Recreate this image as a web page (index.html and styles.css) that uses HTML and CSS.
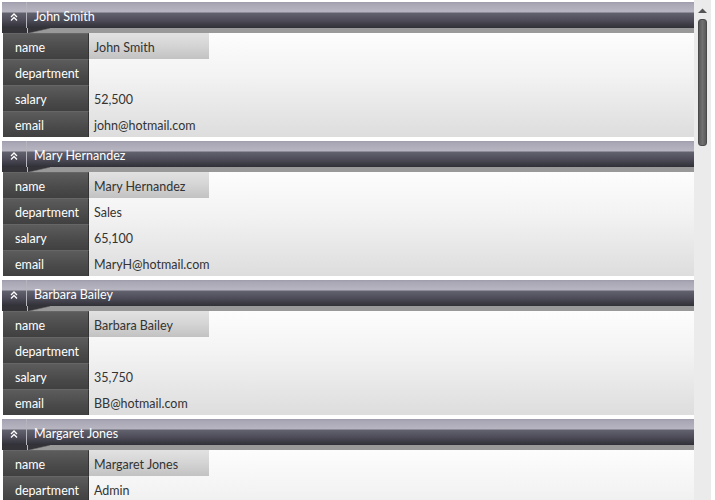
FILE: index.html
```html
<!DOCTYPE html>
<html>
<head>
<meta charset="utf-8">
<link rel="stylesheet" href="styles.css">
</head>
<body>
<div class="app">
  <div class="list">
    <section class="group">
      <div class="head">
        <span class="toggle"><svg width="8" height="8" viewBox="0 0 8 8"><path d="M1 4 L4 1 L7 4 M1 7.5 L4 4.5 L7 7.5" fill="none" stroke="#fff" stroke-width="1.3"/></svg></span>
        <span class="title">John Smith</span>
      </div>
      <div class="strip"><span class="tab"></span><span class="tabline"></span></div>
      <div class="rows">
        <div class="row"><span class="key">name</span><span class="val box">John Smith</span></div>
        <div class="row"><span class="key">department</span><span class="val"></span></div>
        <div class="row"><span class="key">salary</span><span class="val">52,500</span></div>
        <div class="row"><span class="key">email</span><span class="val">john@hotmail.com</span></div>
      </div>
    </section>
    <section class="group">
      <div class="head">
        <span class="toggle"><svg width="8" height="8" viewBox="0 0 8 8"><path d="M1 4 L4 1 L7 4 M1 7.5 L4 4.5 L7 7.5" fill="none" stroke="#fff" stroke-width="1.3"/></svg></span>
        <span class="title">Mary Hernandez</span>
      </div>
      <div class="strip"><span class="tab"></span><span class="tabline"></span></div>
      <div class="rows">
        <div class="row"><span class="key">name</span><span class="val box">Mary Hernandez</span></div>
        <div class="row"><span class="key">department</span><span class="val">Sales</span></div>
        <div class="row"><span class="key">salary</span><span class="val">65,100</span></div>
        <div class="row"><span class="key">email</span><span class="val">MaryH@hotmail.com</span></div>
      </div>
    </section>
    <section class="group">
      <div class="head">
        <span class="toggle"><svg width="8" height="8" viewBox="0 0 8 8"><path d="M1 4 L4 1 L7 4 M1 7.5 L4 4.5 L7 7.5" fill="none" stroke="#fff" stroke-width="1.3"/></svg></span>
        <span class="title">Barbara Bailey</span>
      </div>
      <div class="strip"><span class="tab"></span><span class="tabline"></span></div>
      <div class="rows">
        <div class="row"><span class="key">name</span><span class="val box">Barbara Bailey</span></div>
        <div class="row"><span class="key">department</span><span class="val"></span></div>
        <div class="row"><span class="key">salary</span><span class="val">35,750</span></div>
        <div class="row"><span class="key">email</span><span class="val">BB@hotmail.com</span></div>
      </div>
    </section>
    <section class="group">
      <div class="head">
        <span class="toggle"><svg width="8" height="8" viewBox="0 0 8 8"><path d="M1 4 L4 1 L7 4 M1 7.5 L4 4.5 L7 7.5" fill="none" stroke="#fff" stroke-width="1.3"/></svg></span>
        <span class="title">Margaret Jones</span>
      </div>
      <div class="strip"><span class="tab"></span><span class="tabline"></span></div>
      <div class="rows">
        <div class="row"><span class="key">name</span><span class="val box">Margaret Jones</span></div>
        <div class="row"><span class="key">department</span><span class="val">Admin</span></div>
        <div class="row"><span class="key">salary</span><span class="val">48,000</span></div>
        <div class="row"><span class="key">email</span><span class="val">MJ@hotmail.com</span></div>
      </div>
    </section>
  </div>
  <div class="scrollbar">
    <svg class="arrow" width="9" height="6" viewBox="0 0 9 6"><path d="M0 5 L4.5 0.5 L9 5 Z" fill="#555"/></svg>
    <div class="thumb"></div>
  </div>
</div>
</body>
</html>
```
FILE: styles.css
```css
html, body {
  margin: 0;
  padding: 0;
  background: #fff;
  height: 100%;
  overflow: hidden;
}
body {
  font-family: Lato, "Open Sans", sans-serif;
  font-size: 12.5px;
}
.app {
  display: flex;
  height: 500px;
  padding-right: 4px;
  box-sizing: border-box;
}
.list {
  flex: 1;
  padding: 2px 0 0 2px;
  display: flex;
  flex-direction: column;
  gap: 4px;
  overflow: hidden;
}
.group {
  display: flex;
  flex-direction: column;
  flex-shrink: 0;
}
.head {
  height: 26px;
  display: flex;
  align-items: center;
  background: linear-gradient(to bottom, #9e9cab 0px, #a9a7b5 2px, #b6b5c0 10px, #62616e 11px, #4e4d59 18px, #303037 26px);
  color: #fff;
}
.toggle {
  width: 25px;
  height: 26px;
  display: flex;
  align-items: center;
  justify-content: center;
  padding-top: 3px;
  box-sizing: border-box;
  border-right: 1px solid #b4b4bc;
}
.title {
  padding-left: 7px;
  padding-top: 3px;
}
.strip {
  height: 5px;
  background: #999;
  display: flex;
}
.tab {
  width: 25px;
  background: #333338;
  border-right: 1px solid #b4b4bc;
}
.tabline {
  width: 22px;
  background: linear-gradient(to bottom right, #333338 0%, #333338 45%, #999 60%);
}
.rows {
  margin-left: 1px;
  background: linear-gradient(to bottom, #fdfdfd 0%, #f3f3f3 40%, #dddddd 100%);
  display: flex;
  flex-direction: column;
}
.row {
  height: 26px;
  display: flex;
}
.key {
  width: 86px;
  box-sizing: border-box;
  padding-left: 12px;
  padding-top: 2px;
  display: flex;
  align-items: center;
  color: #fff;
  background: linear-gradient(to bottom, #5c5c5c 0%, #4a4a4a 60%, #404040 100%);
  border-top: 1px solid #666;
  border-right: 1px solid #333;
}
.val {
  display: flex;
  align-items: center;
  padding-left: 5px;
  padding-top: 2px;
  color: #333;
}
.val.box {
  width: 120px;
  box-sizing: border-box;
  background: linear-gradient(to bottom, #e2e2e2 0%, #d4d4d4 50%, #c2c2c2 100%);
}
.scrollbar {
  width: 17px;
  background: #ebebeb;
  position: relative;
  flex-shrink: 0;
}
.arrow {
  position: absolute;
  left: 4px;
  top: 8px;
}
.thumb {
  position: absolute;
  left: 4px;
  top: 19px;
  width: 9px;
  height: 127px;
  border-radius: 3px;
  background: linear-gradient(to right, #5a5a5a, #707070 50%, #5a5a5a);
  box-sizing: border-box;
  border: 1px solid #4a4a4a;
}
```
